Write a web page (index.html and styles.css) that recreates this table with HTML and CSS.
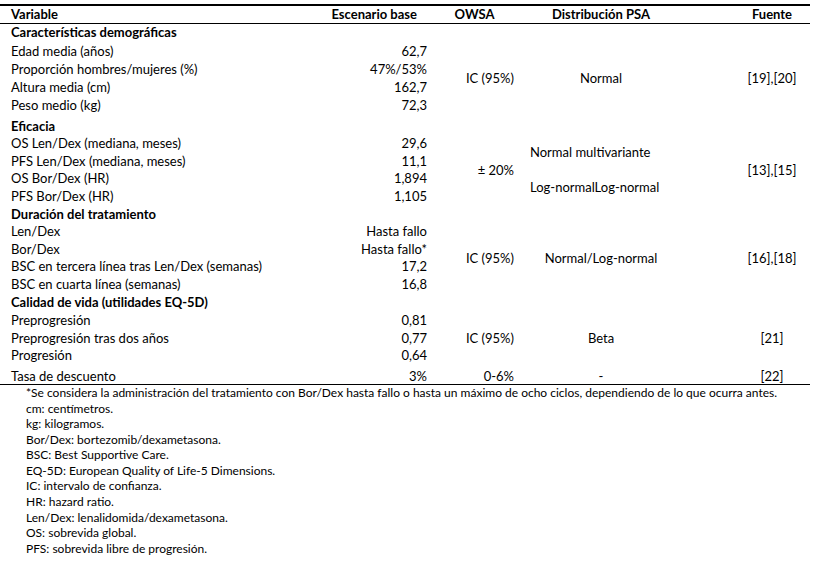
FILE: index.html
```html
<!DOCTYPE html>
<html lang="es">
<head>
<meta charset="utf-8">
<link rel="stylesheet" href="styles.css">
</head>
<body>
<table class="tbl">
  <colgroup>
    <col class="c1"><col class="c2"><col class="c3"><col class="c4"><col class="c5">
  </colgroup>
  <thead>
    <tr class="head">
      <th class="var">Variable</th>
      <th class="base">Escenario base</th>
      <th class="owsa">OWSA</th>
      <th class="psa">Distribución PSA</th>
      <th class="src">Fuente</th>
    </tr>
  </thead>
  <tbody>
    <tr><td class="var grp">Características demográficas</td><td></td><td></td><td></td><td></td></tr>
    <tr class="g1"><td class="var">Edad media (años)</td><td class="num">62,7</td>
      <td class="owsa-v" rowspan="4">IC (95%)</td><td class="psa-v" rowspan="4">Normal</td><td class="src-v" rowspan="4">[19],[20]</td></tr>
    <tr class="g1"><td class="var">Proporción hombres/mujeres (%)</td><td class="num">47%/53%</td></tr>
    <tr class="g1"><td class="var">Altura media (cm)</td><td class="num">162,7</td></tr>
    <tr class="g1"><td class="var">Peso medio (kg)</td><td class="num">72,3</td></tr>

    <tr class="gap"><td class="var grp">Eficacia</td><td></td><td></td><td></td><td></td></tr>
    <tr><td class="var">OS Len/Dex (mediana, meses)</td><td class="num">29,6</td>
      <td class="owsa-v" rowspan="4">± 20%</td>
      <td class="psa-v multi" rowspan="4"><div class="p1">Normal multivariante</div><div class="p2">Log-normalLog-normal</div></td>
      <td class="src-v" rowspan="4">[13],[15]</td></tr>
    <tr><td class="var">PFS Len/Dex (mediana, meses)</td><td class="num">11,1</td></tr>
    <tr><td class="var">OS Bor/Dex (HR)</td><td class="num">1,894</td></tr>
    <tr><td class="var">PFS Bor/Dex (HR)</td><td class="num">1,105</td></tr>

    <tr><td class="var grp">Duración del tratamiento</td><td></td><td></td><td></td><td></td></tr>
    <tr><td class="var">Len/Dex</td><td class="num">Hasta fallo</td>
      <td class="owsa-v" rowspan="4">IC (95%)</td><td class="psa-v" rowspan="4">Normal/Log-normal</td><td class="src-v" rowspan="4">[16],[18]</td></tr>
    <tr><td class="var">Bor/Dex</td><td class="num">Hasta fallo*</td></tr>
    <tr><td class="var">BSC en tercera línea tras Len/Dex (semanas)</td><td class="num">17,2</td></tr>
    <tr><td class="var">BSC en cuarta línea (semanas)</td><td class="num">16,8</td></tr>

    <tr><td class="var grp">Calidad de vida (utilidades EQ-5D)</td><td></td><td></td><td></td><td></td></tr>
    <tr class="gap1"><td class="var">Preprogresión</td><td class="num">0,81</td>
      <td class="owsa-v" rowspan="3">IC (95%)</td><td class="psa-v" rowspan="3">Beta</td><td class="src-v" rowspan="3">[21]</td></tr>
    <tr><td class="var">Preprogresión tras dos años</td><td class="num">0,77</td></tr>
    <tr><td class="var">Progresión</td><td class="num">0,64</td></tr>

    <tr class="last"><td class="var">Tasa de descuento</td><td class="num">3%</td>
      <td class="owsa-v">0-6%</td><td class="psa-v">-</td><td class="src-v">[22]</td></tr>
  </tbody>
</table>
<div class="notes">
  <p>*Se considera la administración del tratamiento con Bor/Dex hasta fallo o hasta un máximo de ocho ciclos, dependiendo de lo que ocurra antes.</p>
  <p>cm: centímetros.</p>
  <p>kg: kilogramos.</p>
  <p>Bor/Dex: bortezomib/dexametasona.</p>
  <p>BSC: Best Supportive Care.</p>
  <p>EQ-5D: European Quality of Life-5 Dimensions.</p>
  <p>IC: intervalo de confianza.</p>
  <p>HR: hazard ratio.</p>
  <p>Len/Dex: lenalidomida/dexametasona.</p>
  <p>OS: sobrevida global.</p>
  <p>PFS: sobrevida libre de progresión.</p>
</div>
</body>
</html>
```

FILE: styles.css
```css
html, body {
  margin: 0;
  padding: 0;
  background: #ffffff;
}
body {
  font-family: "Lato", "Noto Sans", sans-serif;
  font-size: 13px;
  color: #000000;
  padding-top: 4px;
}
.tbl {
  border-collapse: collapse;
  width: 810px;
  table-layout: fixed;
}
.c1 { width: 300px; }
.c2 { width: 137px; }
.c3 { width: 79px; }
.c4 { width: 170px; }
.c5 { width: 124px; }

.tbl th, .tbl td {
  padding: 0;
  line-height: 17.6px;
  vertical-align: middle;
  white-space: nowrap;
}
.head th {
  font-weight: 700;
  border-top: 2px solid #000;
  border-bottom: 1px solid #000;
  height: 17px;
  line-height: 17px;
}
.head th.var { text-align: left; padding-left: 11px; }
.head th.base { text-align: right; padding-right: 20px; }
.head th.owsa { text-align: center; padding-right: 4px; }
.head th.psa { text-align: center; }
.head th.src { text-align: center; padding-left: 48px; }

td.var { padding-left: 11px; }
td.grp { font-weight: 700; }
td.num { text-align: right; padding-right: 10px; }
td.owsa-v { text-align: right; padding-right: 2px; }
td.psa-v { text-align: center; }
td.psa-v.multi { text-align: left; padding-left: 14px; }
.multi .p2 { margin-top: 17px; }
td.src-v { text-align: center; padding-left: 48px; }

tr.g1 td { line-height: 18px; }
tr.gap td { padding-top: 4px; }
tr.gap1 td { padding-top: 1px; }
tr.last td {
  padding-top: 3px;
  line-height: 16px;
  border-bottom: 1px solid #000;
}

.notes {
  padding-left: 26px;
  font-size: 12px;
  line-height: 15.6px;
}
.notes p { margin: 0; }
```
